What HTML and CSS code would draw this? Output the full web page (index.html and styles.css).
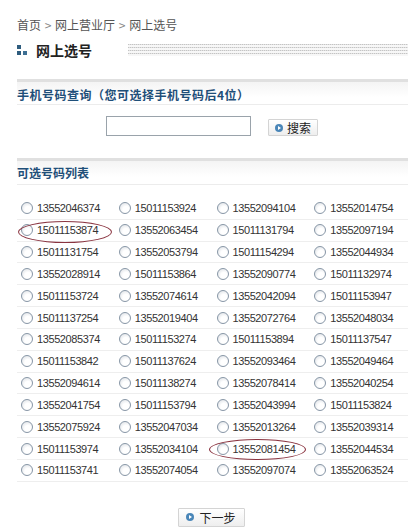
FILE: index.html
```html
<!DOCTYPE html>
<html lang="zh-CN">
<head>
<meta charset="utf-8">
<title>网上选号</title>
<link rel="stylesheet" href="styles.css">
</head>
<body>
<div class="page">
  <div class="crumb">首页 <span class="sep">&gt;</span> 网上营业厅 <span class="sep">&gt;</span> 网上选号</div>
  <div class="title-row">
    <span class="title-icon"><i class="a"></i><i class="b"></i><i class="c"></i></span>
    <span class="title">网上选号</span>
    <svg class="dots" viewBox="0 0 280 12" preserveAspectRatio="none" aria-hidden="true">
      <defs>
        <pattern id="dotpat" width="2" height="3" patternUnits="userSpaceOnUse">
          <rect x="0" y="0" width="1" height="1" fill="#c4c4c4"/>
          <rect x="1" y="0" width="1" height="1" fill="#e2e2e2"/>
        </pattern>
      </defs>
      <rect x="0" y="0" width="280" height="12" fill="#f7f7f7"/>
      <rect x="0" y="0" width="280" height="12" fill="url(#dotpat)"/>
    </svg>
  </div>

  <div class="sec-head sec1">手机号码查询（您可选择手机号码后4位）</div>
  <div class="search-row">
    <input class="search-input" type="text">
    <button class="btn btn-search"><span class="btn-ico"></span>搜索</button>
  </div>

  <div class="sec-head sec2">可选号码列表</div>
  <div class="grid">
    <div class="row"><label class="cell"><input type="radio" name="n">13552046374</label><label class="cell"><input type="radio" name="n">15011153924</label><label class="cell"><input type="radio" name="n">13552094104</label><label class="cell"><input type="radio" name="n">13552014754</label></div>
    <div class="row"><label class="cell"><span class="ring ring1"></span><input type="radio" name="n">15011153874</label><label class="cell"><input type="radio" name="n">13552063454</label><label class="cell"><input type="radio" name="n">15011131794</label><label class="cell"><input type="radio" name="n">13552097194</label></div>
    <div class="row"><label class="cell"><input type="radio" name="n">15011131754</label><label class="cell"><input type="radio" name="n">13552053794</label><label class="cell"><input type="radio" name="n">15011154294</label><label class="cell"><input type="radio" name="n">13552044934</label></div>
    <div class="row"><label class="cell"><input type="radio" name="n">13552028914</label><label class="cell"><input type="radio" name="n">15011153864</label><label class="cell"><input type="radio" name="n">13552090774</label><label class="cell"><input type="radio" name="n">15011132974</label></div>
    <div class="row"><label class="cell"><input type="radio" name="n">15011153724</label><label class="cell"><input type="radio" name="n">13552074614</label><label class="cell"><input type="radio" name="n">13552042094</label><label class="cell"><input type="radio" name="n">15011153947</label></div>
    <div class="row"><label class="cell"><input type="radio" name="n">15011137254</label><label class="cell"><input type="radio" name="n">13552019404</label><label class="cell"><input type="radio" name="n">13552072764</label><label class="cell"><input type="radio" name="n">13552048034</label></div>
    <div class="row"><label class="cell"><input type="radio" name="n">13552085374</label><label class="cell"><input type="radio" name="n">15011153274</label><label class="cell"><input type="radio" name="n">15011153894</label><label class="cell"><input type="radio" name="n">15011137547</label></div>
    <div class="row"><label class="cell"><input type="radio" name="n">15011153842</label><label class="cell"><input type="radio" name="n">15011137624</label><label class="cell"><input type="radio" name="n">13552093464</label><label class="cell"><input type="radio" name="n">13552049464</label></div>
    <div class="row"><label class="cell"><input type="radio" name="n">13552094614</label><label class="cell"><input type="radio" name="n">15011138274</label><label class="cell"><input type="radio" name="n">13552078414</label><label class="cell"><input type="radio" name="n">13552040254</label></div>
    <div class="row"><label class="cell"><input type="radio" name="n">13552041754</label><label class="cell"><input type="radio" name="n">15011153794</label><label class="cell"><input type="radio" name="n">13552043994</label><label class="cell"><input type="radio" name="n">15011153824</label></div>
    <div class="row"><label class="cell"><input type="radio" name="n">13552075924</label><label class="cell"><input type="radio" name="n">13552047034</label><label class="cell"><input type="radio" name="n">13552013264</label><label class="cell"><input type="radio" name="n">13552039314</label></div>
    <div class="row"><label class="cell"><input type="radio" name="n">15011153974</label><label class="cell"><input type="radio" name="n">13552034104</label><label class="cell"><span class="ring ring2"></span><input type="radio" name="n">13552081454</label><label class="cell"><input type="radio" name="n">13552044534</label></div>
    <div class="row"><label class="cell"><input type="radio" name="n">15011153741</label><label class="cell"><input type="radio" name="n">13552074054</label><label class="cell"><input type="radio" name="n">13552097074</label><label class="cell"><input type="radio" name="n">13552063524</label></div>
  </div>

  <div class="next-row">
    <button class="btn btn-next"><span class="btn-ico"></span>下一步</button>
  </div>
</div>
</body>
</html>
```

FILE: styles.css
```css
html, body {
  margin: 0;
  padding: 0;
  background: #ffffff;
}
body {
  font-family: "Noto Sans CJK SC", "Liberation Sans", sans-serif;
  font-size: 12px;
  color: #333;
}
.page {
  width: 391px;
  padding: 18px 3px 0 17px;
}
.crumb {
  height: 14px;
  line-height: 14px;
  color: #555;
  font-size: 12px;
  white-space: nowrap;
}
.crumb .sep {
  color: #888;
  padding: 0 1px;
}
.title-row {
  display: flex;
  align-items: center;
  height: 18px;
  margin-top: 9px;
}
.title-icon {
  position: relative;
  width: 11px;
  height: 10px;
  flex: none;
}
.title-icon i {
  position: absolute;
  display: block;
  background: #2e5c7e;
}
.title-icon .a { left: 0; top: 0; width: 4px; height: 4px; }
.title-icon .b { left: 0; top: 6px; width: 4px; height: 4px; }
.title-icon .c { left: 6px; top: 6px; width: 4px; height: 4px; background: #3d6f93; }
.title {
  margin-left: 8px;
  font-size: 14px;
  font-weight: bold;
  color: #222;
  line-height: 18px;
}
.dots {
  display: block;
  width: 280px;
  height: 12px;
  margin-left: auto;
  flex: none;
}
.sec-head {
  margin-top: 20px;
  height: 22px;
  line-height: 26px;
  border-top: 3px solid #e0e0e0;
  border-bottom: 1px solid #ececec;
  background: linear-gradient(#f4f4f4, #ffffff 70%);
  color: #1f4f79;
  font-weight: bold;
  font-size: 12px;
  white-space: nowrap;
}
.sec1 {
  letter-spacing: 0.5px;
}
.sec2 {
  margin-top: 0;
  height: 23px;
  line-height: 24px;
}
.search-row {
  display: flex;
  align-items: flex-start;
  height: 53px;
  padding: 11px 0 0 89px;
  box-sizing: border-box;
}
.search-input {
  width: 145px;
  height: 20px;
  box-sizing: border-box;
  border: 1px solid #9aa3ab;
  padding: 0;
  margin: 0;
  background: #fff;
}
.btn {
  display: inline-flex;
  align-items: center;
  gap: 4px;
  height: 17px;
  box-sizing: border-box;
  padding: 0 6px;
  margin: 0;
  border: 1px solid #d4d4d4;
  border-radius: 1px;
  background: linear-gradient(#ffffff, #eeeeee);
  font-family: "Noto Sans CJK SC", "Liberation Sans", sans-serif;
  font-size: 12px;
  color: #222;
  line-height: 15px;
  white-space: nowrap;
}
.btn-search {
  margin-left: 17px;
  margin-top: 3px;
  height: 17px;
}
.btn-ico {
  position: relative;
  display: inline-block;
  width: 8px;
  height: 8px;
  border-radius: 50%;
  background: #4a86b8;
  flex: none;
}
.btn-ico::after {
  content: "";
  position: absolute;
  left: 3px;
  top: 2px;
  width: 0;
  height: 0;
  border-top: 2px solid transparent;
  border-bottom: 2px solid transparent;
  border-left: 3px solid #fff;
}
.grid {
  margin-top: 13px;
}
.row {
  display: grid;
  grid-template-columns: repeat(4, 1fr);
  height: 21.83px;
  box-sizing: border-box;
  border-bottom: 1px solid #eeeeee;
}
.cell {
  position: relative;
  display: flex;
  align-items: center;
  padding-left: 4px;
  font-family: "Liberation Sans", sans-serif;
  font-size: 11px;
  letter-spacing: -0.4px;
  color: #333;
  white-space: nowrap;
}
.cell input[type="radio"] {
  -webkit-appearance: none;
  appearance: none;
  width: 12px;
  height: 12px;
  margin: 0 4px 0 0;
  border: 1px solid #8796a6;
  border-radius: 50%;
  background: radial-gradient(circle at 60% 65%, #ffffff 0 35%, #e3e6ea 80%);
  box-sizing: border-box;
  flex: none;
}
.ring {
  position: absolute;
  border: 1px solid #8a3440;
  border-radius: 50%;
  pointer-events: none;
}
.ring1 {
  left: 1px;
  top: 1px;
  width: 92px;
  height: 20px;
}
.ring2 {
  left: -4px;
  top: 1px;
  width: 95px;
  height: 19px;
}
.next-row {
  display: flex;
  justify-content: center;
  padding-top: 26px;
  padding-right: 2px;
}
.btn-next {
  height: 19px;
  padding: 0 8px 0 7px;
  gap: 5px;
}
```
